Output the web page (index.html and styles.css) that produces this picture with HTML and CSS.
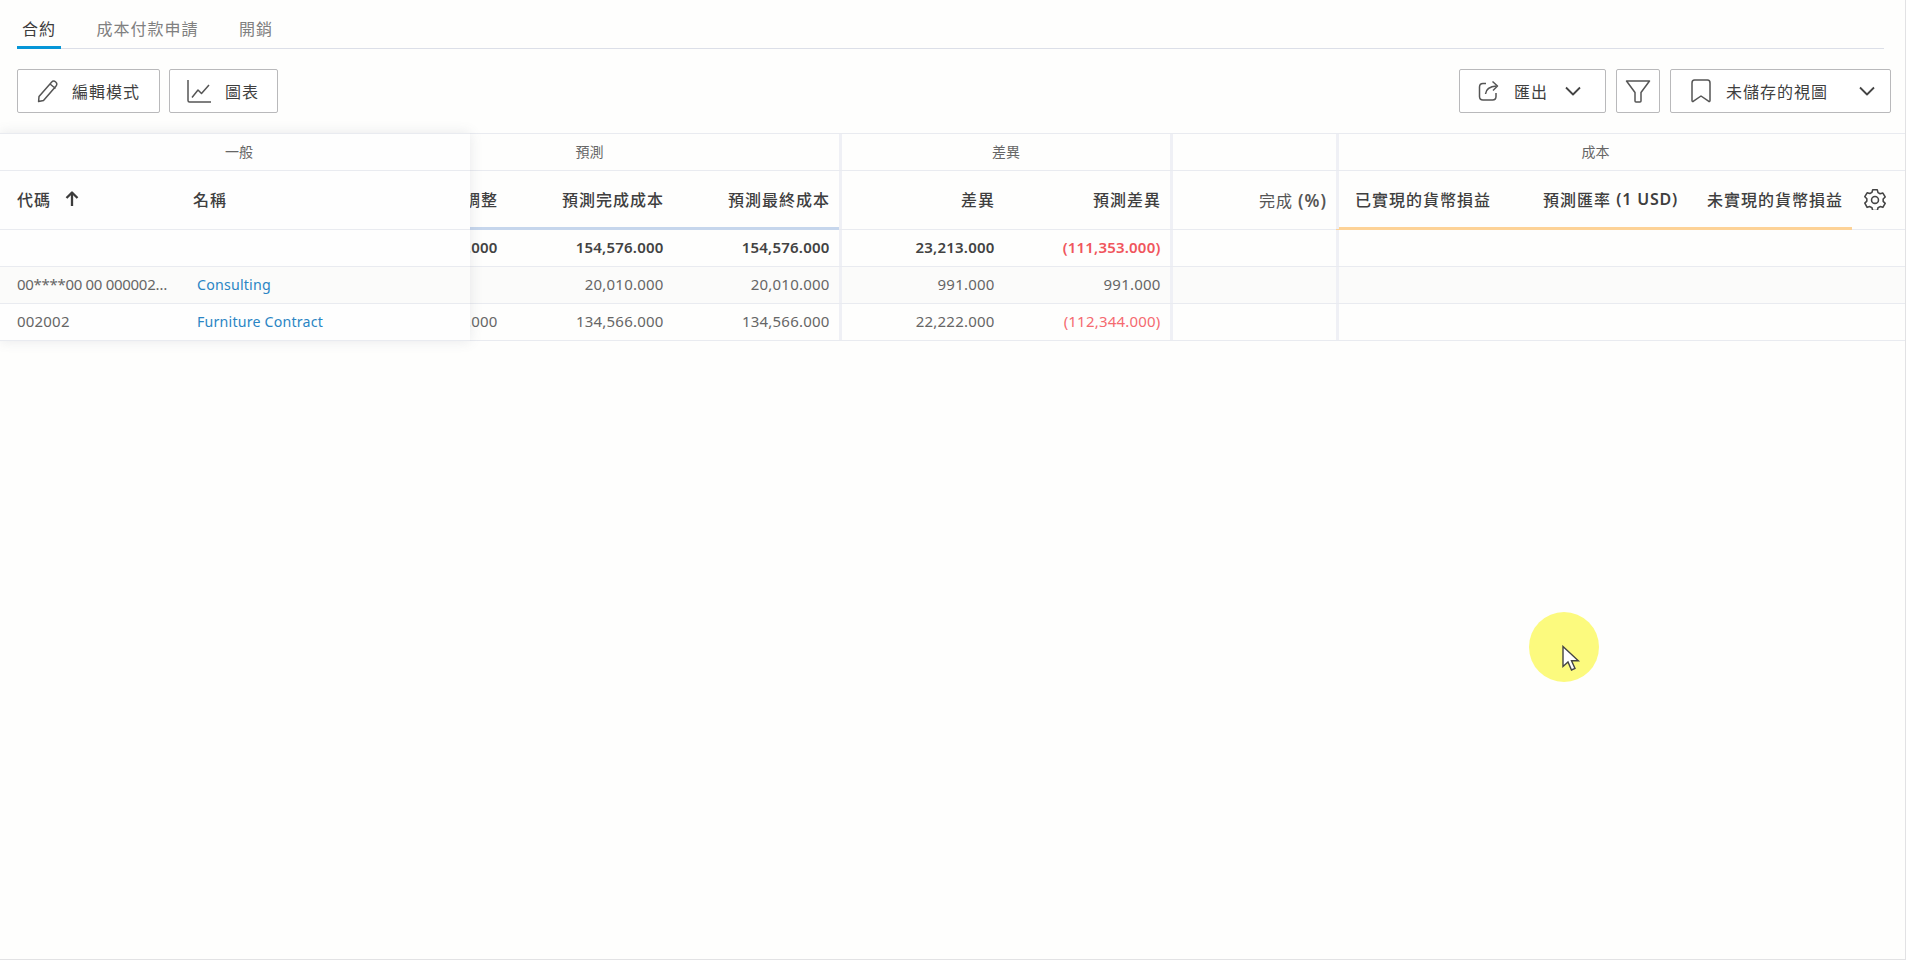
FILE: index.html
```html
<!DOCTYPE html>
<html lang="zh-Hant">
<head>
<meta charset="utf-8">
<title>合約</title>
<link rel="stylesheet" href="styles.css">
</head>
<body>
<div class="page">
  <nav class="tabs">
    <a class="tab active">合約</a>
    <a class="tab">成本付款申請</a>
    <a class="tab">開銷</a>
  </nav>
  <div class="toolbar">
    <div class="group">
      <button class="btn btn-edit">
        <svg class="ico" width="24" height="24" viewBox="0 0 24 24"><path d="M3 17.500 15.500 3.200c1.200-1.300 3-1.300 4.200-.2s1.300 2.900.2 4.200L7.500 21.500 2.600 22.500z M14 5l5.500 4.500"/></svg>
        <span>編輯模式</span>
      </button>
      <button class="btn btn-chart">
        <svg class="ico" width="26" height="26" viewBox="0 0 26 26"><path d="M2 2v20.500c0 1 .5 1.500 1.500 1.500H25"/><path d="M6 19.500 12 12l3.500 3.500L23 7"/></svg>
        <span>圖表</span>
      </button>
    </div>
    <div class="group group-right">
      <button class="btn btn-export">
        <svg class="ico" width="22" height="22" viewBox="0 0 22 22"><path d="M8 3.500H5C3 3.500 1.500 5 1.500 7v9.500c0 2 1.500 3.500 3.500 3.500h9.500c2 0 3.500-1.500 3.500-3.500V13"/><path d="M7.500 14c.5-5 3.500-7.500 11-8"/><path d="M14.500 1.500 19.500 6 15 10.500"/></svg>
        <span>匯出</span>
        <svg class="chev" width="16" height="10" viewBox="0 0 16 10"><path d="M1 1.500 8 8.500l7-7"/></svg>
      </button>
      <button class="btn btn-filter">
        <svg class="ico" width="26" height="26" viewBox="0 0 26 26"><path d="M1.500 3h23L16 14.500V23c0 .8-.5 1-1 1h-4c-.5 0-1-.2-1-1v-8.500z"/></svg>
      </button>
      <button class="btn btn-view">
        <svg class="ico" width="20" height="24" viewBox="0 0 20 24"><path d="M1 21.500V4C1 2.500 2 1 3.500 1h13C18 1 19 2.500 19 4v17.500c0 1-.8 1.300-1.500.7L10 17l-7.500 5.200c-.7.6-1.500.3-1.500-.7z"/></svg>
        <span class="view-label">未儲存的視圖</span>
        <svg class="chev" width="16" height="10" viewBox="0 0 16 10"><path d="M1 1.500 8 8.500l7-7"/></svg>
      </button>
    </div>
  </div>

  <div class="table">
    <div class="row row-group">
      <div class="cell span-forecast">預測</div>
      <div class="cell span-variance sep">差異</div>
      <div class="cell sep"></div>
      <div class="cell span-cost sep">成本</div>
      <div class="cell"></div>
    </div>
    <div class="row row-head">
      <div class="cell num blue">調整</div>
      <div class="cell num blue">預測完成成本</div>
      <div class="cell num blue">預測最終成本</div>
      <div class="cell num sep">差異</div>
      <div class="cell num">預測差異</div>
      <div class="cell num sep light">完成&nbsp;<span class="lat-big">(%)</span></div>
      <div class="cell sep orange pad-left">已實現的貨幣損益</div>
      <div class="cell num orange">預測匯率&nbsp;<span class="lat">(1 USD)</span></div>
      <div class="cell num orange">未實現的貨幣損益</div>
      <div class="cell gear-cell">
        <svg class="ico gear" width="22" height="22" viewBox="0 0 24 24"><path d="M9.500 2h5l.8 3 2.300 1.300 3-.8 2.500 4.300-2.200 2.200v2.600l2.200 2.200-2.500 4.300-3-.8-2.300 1.300-.8 3h-5l-.8-3-2.300-1.300-3 .8L.9 16.500 3.100 14.300v-2.600L.9 9.500l2.500-4.300 3 .8 2.300-1.300z"/><circle cx="12" cy="13" r="3.800"/></svg>
      </div>
    </div>
    <div class="row row-total">
      <div class="cell num">.000</div>
      <div class="cell num">154,576.000</div>
      <div class="cell num">154,576.000</div>
      <div class="cell num sep">23,213.000</div>
      <div class="cell num red">(111,353.000)</div>
      <div class="cell sep"></div>
      <div class="cell sep"></div>
      <div class="cell"></div>
      <div class="cell"></div>
      <div class="cell"></div>
    </div>
    <div class="row row-body shade">
      <div class="cell num"></div>
      <div class="cell num">20,010.000</div>
      <div class="cell num">20,010.000</div>
      <div class="cell num sep">991.000</div>
      <div class="cell num">991.000</div>
      <div class="cell sep"></div>
      <div class="cell sep"></div>
      <div class="cell"></div>
      <div class="cell"></div>
      <div class="cell"></div>
    </div>
    <div class="row row-body">
      <div class="cell num">.000</div>
      <div class="cell num">134,566.000</div>
      <div class="cell num">134,566.000</div>
      <div class="cell num sep">22,222.000</div>
      <div class="cell num red">(112,344.000)</div>
      <div class="cell sep"></div>
      <div class="cell sep"></div>
      <div class="cell"></div>
      <div class="cell"></div>
      <div class="cell"></div>
    </div>

    <div class="frozen">
      <div class="f-row f-group">一般</div>
      <div class="f-row f-head">
        <div class="f-code">代碼
          <svg class="arrow" width="14" height="16" viewBox="0 0 14 16"><path d="M7 15V1.500M1.500 7 7 1.500 12.500 7"/></svg>
        </div>
        <div class="f-name">名稱</div>
      </div>
      <div class="f-row f-total"></div>
      <div class="f-row f-body shade">
        <div class="f-code f-tight">00****00 00 000002…</div>
        <a class="f-link">Consulting</a>
      </div>
      <div class="f-row f-body">
        <div class="f-code">002002</div>
        <a class="f-link">Furniture Contract</a>
      </div>
    </div>
  </div>

  <div class="spot">
    <svg width="20" height="28" viewBox="0 0 20 28"><path d="M2 1.500v20l5-4.500 3.500 8 3.500-1.500-3.500-7.800h6.800z"/></svg>
  </div>
</div>
</body>
</html>
```

FILE: styles.css
```css
* { box-sizing: border-box; }
html, body { margin: 0; padding: 0; }
body {
  background: #fefefd;
  font-family: "Noto Sans", "Noto Sans CJK TC", sans-serif;
  color: #666;
  font-size: 15px;
  letter-spacing: 0.2px;
}
.page {
  position: relative;
  width: 1906px;
  height: 960px;
  overflow: hidden;
  border-right: 1px solid #e2e2e4;
  border-bottom: 1px solid #e2e2e4;
}
.tabs {
  display: flex;
  height: 49px;
  margin: 0 21px 0 17px;
  border-bottom: 1px solid #dcdfe8;
}
.tab {
  display: flex;
  align-items: center;
  height: 49px;
  padding: 6px 5px 0;
  margin-right: 30.500px;
  font-size: 16px;
  letter-spacing: 1px;
  color: #808080;
}
.tab.active {
  color: #3c3c3c;
  border-bottom: 3px solid #0696d7;
  padding-top: 9px;
}
.toolbar {
  display: flex;
  justify-content: space-between;
  margin: 20px 14px 0 17px;
}
.group { display: flex; gap: 9px; }
.group-right { gap: 10px; }
.btn {
  display: flex;
  align-items: center;
  height: 44px;
  padding: 0;
  background: #fff;
  border: 1px solid #b9b9bb;
  border-radius: 2px;
  font: inherit;
  font-size: 16px;
  letter-spacing: 1px;
  color: #3f3f3f;
  text-align: left;
}
.ico, .chev, .arrow { fill: none; stroke: #555; stroke-width: 1.500; stroke-linejoin: round; flex: none; }
.chev { stroke-width: 1.800; stroke: #444; }
.gear { stroke: #444; stroke-width: 1.700; }
.btn-edit { width: 143px; padding-left: 18px; gap: 12px; }
.btn-chart { width: 109px; padding-left: 16px; gap: 13px; }
.btn-export { width: 147px; padding-left: 18px; gap: 14px; }
.btn-export .chev { margin-left: 3px; }
.btn-filter { width: 44px; justify-content: center; }
.btn-view { width: 221px; padding-left: 20px; gap: 15px; }
.view-label { flex: 1; }
.btn-view .chev { margin-right: 15px; }

.table {
  position: relative;
  margin-top: 20px;
}
.row {
  display: grid;
  grid-template-columns: 507px 166px 166px 165px 166px 166px 185px 166px 165px 53px;
  border-bottom: 1px solid #e9ebf0;
}
.row-group {
  height: 38px;
  border-top: 1px solid #e9ebf0;
  font-size: 14px;
  letter-spacing: 0;
  color: #666;
  align-items: stretch;
}
.row-group .cell { justify-content: center; padding-bottom: 3px; }
.span-forecast { grid-column: span 3; padding-left: 340px; }
.span-variance { grid-column: span 2; }
.span-cost { grid-column: span 3; }
.row-head { height: 59px; font-size: 16px; font-weight: 500; letter-spacing: 1px; color: #3f3f3f; }
.row-head .cell { padding-bottom: 2px; }
.row-total { height: 37px; font-weight: 600; color: #424242; }
.row-body { height: 37px; }
.row-total .cell, .row-body .cell { padding-bottom: 2px; }
.shade { background: #fbfbfa; }
.cell {
  display: flex;
  align-items: center;
  min-width: 0;
  white-space: nowrap;
}
.num { justify-content: flex-end; padding-right: 9.500px; }
.row-head .num { padding-right: 9px; }
.sep { border-left: 3px solid #eff0f5; }
.blue { box-shadow: 0 1px 0 #c6d6ec, inset 0 -2px 0 #c6d6ec; }
.orange { box-shadow: 0 1px 0 #fdd296, inset 0 -2px 0 #fdd296; }
.pad-left { padding-left: 16px; }
.row-head .light { font-weight: 400; padding-bottom: 0; color: #555; }
.lat-big { font-size: 17px; font-weight: 600; }
.lat { font-weight: 600; letter-spacing: 0.8px; }
.red { color: #f0555c; }
.row-body .red { color: #f56a70; }
.gear-cell { justify-content: flex-start; padding-left: 12px; }

.frozen {
  position: absolute;
  left: 0;
  top: 0;
  width: 470px;
  background: #fefefe;
  box-shadow: 0 0 12px rgba(90, 100, 120, 0.14);
}
.f-row { display: flex; align-items: center; border-bottom: 1px solid #e9ebf0; }
.f-group {
  height: 38px;
  border-top: 1px solid #e9ebf0;
  justify-content: center;
  padding: 0 0 3px 8px;
  font-size: 14px;
  letter-spacing: 0;
}
.f-head { height: 59px; padding: 0 0 2px 17px; font-size: 16px; font-weight: 500; letter-spacing: 1px; color: #3f3f3f; }
.f-total { height: 37px; }
.f-body { height: 37px; padding: 0 0 2px 17px; }
.f-code { display: flex; align-items: center; gap: 14px; width: 176px; flex: none; white-space: nowrap; }
.f-tight { letter-spacing: -0.3px; }
.f-link { margin-left: 4px; color: #2a85c4; font-size: 14.200px; }
.arrow { stroke: #3c3c3c; stroke-width: 2.300; }

.spot {
  position: absolute;
  left: 1529px;
  top: 612px;
  width: 70px;
  height: 70px;
  border-radius: 50%;
  background: #fcfa7e;
  padding: 33px 0 0 32px;
}
.spot svg { fill: #fff; stroke: #444; stroke-width: 1.400; display: block; }
```
